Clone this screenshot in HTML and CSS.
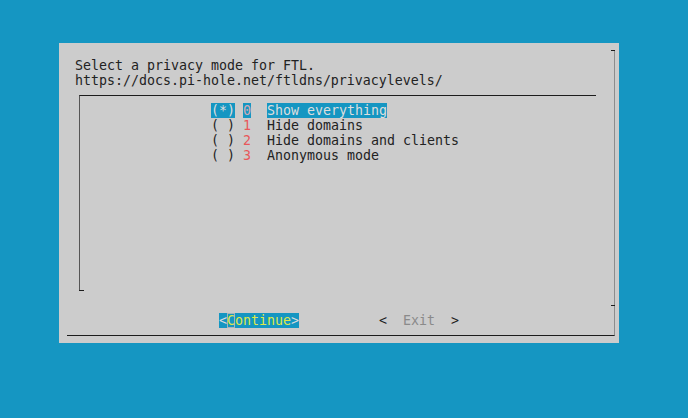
FILE: index.html
```html
<!DOCTYPE html>
<html>
<head>
<meta charset="utf-8">
<link rel="stylesheet" href="styles.css">
</head>
<body>
<div class="screen">
  <div class="dialog">
    <div class="frame">
      <div class="line">Select a privacy mode for FTL.</div>
      <div class="line">https://docs.pi-hole.net/ftldns/privacylevels/</div>
      <div class="listbox">
        <div class="item"><span class="hl">(*)</span> <span class="hl num-hl">0</span>  <span class="hl">Show everything</span></div>
        <div class="item">( ) <span class="num">1</span>  Hide domains</div>
        <div class="item">( ) <span class="num">2</span>  Hide domains and clients</div>
        <div class="item">( ) <span class="num">3</span>  Anonymous mode</div>
      </div>
      <div class="buttons">
        <span class="btn-active"><span class="br">&lt;</span><span class="cur">C</span><span class="lab">ontinue</span><span class="br">&gt;</span></span>
        <span class="btn"><span>&lt;  </span><span class="dim">Exit</span><span>  &gt;</span></span>
      </div>
    </div>
  </div>
</div>
</body>
</html>
```
FILE: styles.css
```css
html, body {
  margin: 0;
  padding: 0;
}
body {
  background: #1596c2;
  width: 688px;
  height: 418px;
  overflow: hidden;
  font-family: "DejaVu Sans Mono", "Liberation Mono", monospace;
  font-size: 13.29px;
  line-height: 15px;
  color: #222222;
}
.screen {
  padding: 43px 0 0 59px;
}
.dialog {
  width: 560px;
  height: 300px;
  box-sizing: border-box;
  background: #cccccc;
  padding: 7px 4px 7px 8px;
}
.frame {
  position: relative;
  height: 286px;
  box-sizing: border-box;
  border-right: 1px solid #8c8c8c;
  border-bottom: 1px solid #1c1c1c;
  padding: 8px 0 0 8px;
}
.frame::before {
  content: "";
  position: absolute;
  right: -1px;
  top: 0;
  width: 4px;
  height: 1px;
  background: #1c1c1c;
}
.frame::after {
  content: "";
  position: absolute;
  right: -1px;
  top: 255px;
  width: 4px;
  height: 1px;
  background: #1c1c1c;
}
.line {
  white-space: pre;
  height: 15px;
}
.listbox {
  position: relative;
  margin: 7px 0 0 4px;
  width: 517px;
  height: 196px;
  box-sizing: border-box;
  border-top: 1px solid #1c1c1c;
  border-left: 1px solid #555555;
  padding: 7px 0 0 131px;
}
.listbox::after {
  content: "";
  position: absolute;
  left: -1px;
  bottom: 0;
  width: 5px;
  height: 1px;
  background: #1c1c1c;
}
.item {
  white-space: pre;
  height: 15px;
}
.hl {
  background: #1596c2;
  color: #dedede;
}
.num-hl {
  color: #d6aab4;
}
.num {
  color: #e8575a;
}
.buttons {
  display: flex;
  margin: 22px 0 0 144px;
  white-space: pre;
  height: 15px;
}
.btn-active {
  display: flex;
  background: #1596c2;
  color: #dcdcdc;
}
.lab {
  color: #dfe848;
}
.cur {
  color: #dfe848;
  box-shadow: inset 0 0 0 1px #a8b4b8;
}
.btn {
  display: flex;
  margin-left: 80px;
  color: #1c1c1c;
}
.dim {
  color: #8a8a8a;
}
```
